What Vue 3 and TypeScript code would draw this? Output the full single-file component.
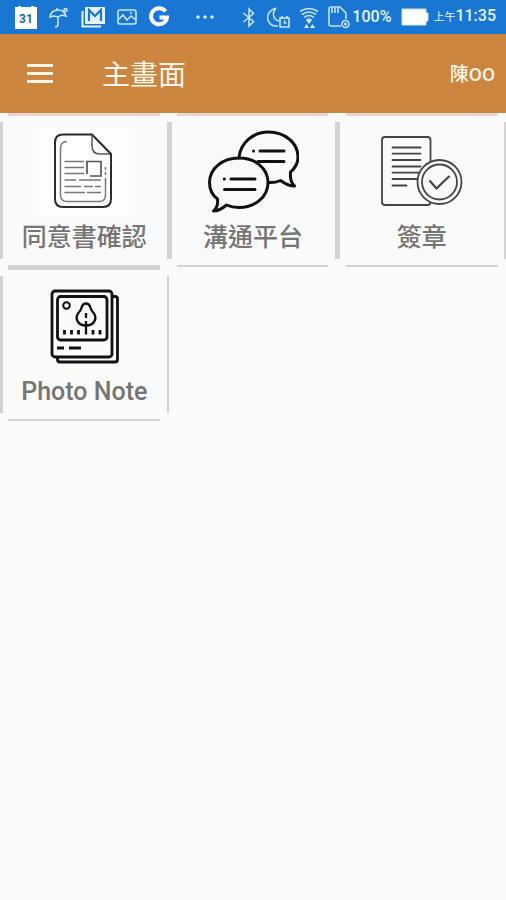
<script setup lang="ts">
type IconName = 'document' | 'chat' | 'stamp' | 'photo'

interface MenuItem {
  icon: IconName
  label: string
}

const title = '主畫面'
const user = '陳OO'
const items: MenuItem[] = [
  { icon: 'document', label: '同意書確認' },
  { icon: 'chat', label: '溝通平台' },
  { icon: 'stamp', label: '簽章' },
  { icon: 'photo', label: 'Photo Note' },
]
</script>

<template>
  <div class="screen">
    <div class="status">
      <div class="group notices">
        <svg width="22" height="24" viewBox="0 0 22 24">
          <path d="M0 2h3V1h3v1h10V1h3v1h3v22H0z" fill="#fff" />
          <text x="11" y="18" text-anchor="middle" class="day">31</text>
        </svg>
        <svg width="20" height="24" viewBox="0 0 20 24" class="line">
          <path d="M1 12C2 4 14 2 17 11l-4-1-4 2-4-1zM9 11v8q0 3-3 3M8 6V3" />
          <circle cx="16.500" cy="5" r="1.500" />
        </svg>
        <svg width="24" height="24" viewBox="0 0 24 24">
          <path d="M1.500 6v15.500H20" fill="none" stroke="#e3f4ff" stroke-width="2" />
          <rect x="4" y="2" width="20" height="17" rx="1" fill="#e3f4ff" />
          <path d="M8 16V5l6 6 6-6v11" fill="none" stroke="#1976d2" stroke-width="2.200" />
        </svg>
        <svg width="20" height="24" viewBox="0 0 20 24" class="line">
          <rect x="1" y="5" width="18" height="14" rx="2" />
          <path d="M2 14l4-4 4 5 4-4 5 4M13 8h2" />
        </svg>
        <svg width="20" height="24" viewBox="0 0 20 24">
          <path d="M16.500 6.500A8 8 0 1 0 18 12.500h-7.500" fill="none" stroke="#fff" stroke-width="4" />
        </svg>
        <svg width="20" height="24" viewBox="0 0 20 24" fill="#d3ecff" class="more">
          <circle cx="3" cy="12" r="1.800" />
          <circle cx="10" cy="12" r="1.800" />
          <circle cx="17" cy="12" r="1.800" />
        </svg>
      </div>
      <div class="group system">
        <svg width="14" height="24" viewBox="0 0 14 24" class="line">
          <path d="M1.500 8l10 8.500L7 21V4l4.500 4.500L1.500 17" />
        </svg>
        <svg width="24" height="24" viewBox="0 0 24 24" class="line">
          <path d="M10 3C-2 6-1 22 12 21M10 3C5 9 8 15 13 16M14 13h9v9h-9zM16 11v3M21 11v3M18.500 15.500v2.500h2" />
        </svg>
        <svg width="18" height="24" viewBox="1 0 18 24" class="line">
          <path d="M1 6.500q9-6 18 0M3 9.500q7-5 14 0M5 12.500q5-4 10 0M7.500 15q2.500-2 5 0" />
          <path d="M7 15h6l-3 4zM5 23l2.500-4 2.500 4zM11 23l2.500-4 2.500 4z" fill="#d3ecff" stroke="none" />
        </svg>
        <svg width="22" height="24" viewBox="0 0 22 24" class="line">
          <path d="M13 21H3q-2 0-2-2V4q0-2 2-2h9l6 6v6M4 3v5M7 3v5M10 3v5" />
          <circle cx="17.500" cy="19" r="3.500" />
          <path d="M16 19h3M17.500 17.500v3" />
        </svg>
        <span class="percent">100%</span>
        <svg width="28" height="24" viewBox="0 0 28 24">
          <path d="M1 4h24v4h2v8h-2v4H1z" fill="#fff" stroke="#c5e5fb" />
        </svg>
        <span class="time"><small>上午</small>11:35</span>
      </div>
    </div>

    <header class="bar">
      <button class="menu" type="button" aria-label="選單">
        <svg width="28" height="22" viewBox="0 0 28 22">
          <path d="M1 2.500h26M1 10.500h26M1 18.500h26" stroke="#fff6e9" stroke-width="3" />
        </svg>
      </button>
      <h1>{{ title }}</h1>
      <span class="user">{{ user }}</span>
    </header>

    <main class="grid">
      <button v-for="item in items" :key="item.label" type="button" class="tile">
        <svg v-if="item.icon === 'document'" class="icon" viewBox="0 0 92 92">
          <rect y="2" width="92" height="90" fill="#fdfdfd" />
          <path d="M54 9.500H25q-8 0-8 8V74q0 8 8 8h40q8 0 8-8V29z" fill="#fff" stroke="#2b2b2b" stroke-width="2" />
          <path d="M54 10v11q0 8 8 8h10" stroke="#555" stroke-width="1.500" />
          <path d="M29 16.500q-6.500 0-6.500 7V70q0 6.500 6.500 6.500h32q6.500 0 6.500-6.500V53M67.500 50v-3M67.500 45v-3" stroke="#777" stroke-width="1.500" />
          <path d="M26.500 36.500H46M26.500 42.500H46M26.500 48.500H46M26.500 55H38M41 55h22M26.500 61.500H43M46 61.500h9M57 61.500h6M26.500 67.500H47M49 67.500h14" stroke="#777" stroke-width="1.700" />
          <path d="M49 49V36.500h14V51H52" stroke="#555" stroke-width="1.700" />
        </svg>

        <svg v-else-if="item.icon === 'chat'" class="icon bold" viewBox="0 0 92 92">
          <path d="M32 33C33 18 46 7 61.500 7C78 7 91 18 91 32C91 38 88 43 83.500 47C83 53 84 58 87.500 61C81 61 77 58 73.500 55.500Q68 58 61.500 57.500" />
          <path d="M32 33C48 33 61 43 61 57.500C61 72 48 82.500 32 82.500Q25 82.500 19.500 80C16 83 12 86 6.500 86C10 83 11 78 10.500 74C5 70 2.500 64 2.500 57.500C2.500 43 16 33 32 33z" />
          <path d="M46.500 26h.1M53 26h24M51 36.500h26M17.300 54h.1M24 54h24M17.500 64.500H48" />
        </svg>

        <svg v-else-if="item.icon === 'stamp'" class="icon" viewBox="0 0 92 92" stroke="#444" stroke-width="1.800">
          <rect x="6" y="12" width="48.500" height="68" rx="3" />
          <path d="M16.500 22.500h28M16.500 28.700h28M16.500 35h28M16.500 41.500h28M16.500 47.700h28M16.500 54h28M16.500 60.500h14" stroke-linecap="round" />
          <circle cx="63.500" cy="57" r="22" fill="#fafafa" />
          <circle cx="63.500" cy="57" r="17.500" />
          <path d="M53.500 55.500l7 8L73.500 51" stroke-width="2.200" />
        </svg>

        <svg v-else class="icon bold photo" viewBox="0 0 92 92">
          <rect x="14" y="12" width="60" height="66" rx="3" />
          <rect x="19.500" y="17.500" width="49.500" height="43.500" rx="3" />
          <path d="M75 17.500h2q2.500 0 2.500 2.500v60.500q0 2.500-2.500 2.500H22q-2.500 0-2.500-2.500V79" />
          <circle cx="28.500" cy="26.500" r="3.300" stroke-width="2" />
          <path d="M48 24.500C53 24.500 52 30 54 32C61 39 56 46.500 48 46.500C40 46.500 35 39 42 32C44 30 43 24.500 48 24.500zM48 34v5M48 42v13.500" stroke-width="2.300" />
          <path d="M26.500 51v4.500M33.500 51v4.500M40.500 51v4.500M55 51v4.500M62 51v4.500" />
          <path d="M19 69h7M31 69h12" />
        </svg>
        <span class="label">{{ item.label }}</span>
      </button>
    </main>
  </div>
</template>

<style>
body {
  margin: 0;
  background: #fafafa;
}
</style>

<style scoped>
.screen {
  min-height: 100vh;
  background: #fafafa;
  font-family: Roboto, "Noto Sans CJK TC", sans-serif;
}

button {
  margin: 0;
  padding: 0;
  border: 0;
  background: none;
  font: inherit;
}

svg {
  display: block;
  flex: none;
}

.status {
  display: flex;
  justify-content: space-between;
  align-items: center;
  height: 34px;
  padding: 0 10px 0 15px;
  background: #1976d2;
  color: #e3f4ff;
}

.group {
  display: flex;
  align-items: center;
}

.notices {
  gap: 12px;
}

.more {
  margin-left: 14px;
}

.system {
  gap: 10px;
}

.line {
  fill: none;
  stroke: #c5e5fb;
  stroke-width: 1.6;
}

.day {
  fill: #27639f;
  font-size: 12px;
  font-weight: 700;
}

.percent,
.time {
  font-size: 16px;
  font-weight: 500;
  line-height: 24px;
  white-space: nowrap;
}

.percent {
  margin-left: -8px;
}

.time {
  margin-left: -6px;
}

.time small {
  font-size: 11px;
  font-weight: 400;
}

.bar {
  display: flex;
  align-items: center;
  height: 79px;
  padding: 0 11px 0 26px;
  background: #cc853f;
  color: #fff6e9;
}

h1 {
  flex: 1;
  margin: 0 0 0 48px;
  padding-top: 4px;
  font-size: 28px;
  font-weight: 400;
  line-height: 40px;
}

.user {
  padding-top: 2px;
  font-size: 19px;
  font-weight: 500;
  line-height: 28px;
}

.grid {
  display: grid;
  grid-template-columns: repeat(3, 1fr);
  grid-auto-rows: 154px;
}

/* Each tile is framed by four separate bars that leave its corners open. */
.tile {
  --bar: linear-gradient(#d3d3d3, #d3d3d3);
  --top: var(--bar);
  display: flex;
  flex-direction: column;
  align-items: center;
  padding: 12px 0 8px;
  background:
    var(--top) center top / calc(100% - 17px) 3px no-repeat,
    var(--bar) center bottom / calc(100% - 17px) 2px no-repeat,
    var(--bar) left center / 3px calc(100% - 17px) no-repeat,
    var(--bar) right center / 2px calc(100% - 17px) no-repeat;
  color: #757575;
}

.tile:nth-child(-n + 3) {
  --top: linear-gradient(#e4d9d2, #e4d9d2);
}

.icon {
  width: 92px;
  height: 92px;
  fill: none;
}

.bold {
  stroke: #111;
  stroke-width: 3;
  stroke-linecap: round;
  stroke-linejoin: round;
}

.photo {
  stroke-width: 2.8;
  stroke-linecap: butt;
}

.label {
  font-size: 25px;
  font-weight: 500;
  line-height: 42px;
  white-space: nowrap;
}
</style>
